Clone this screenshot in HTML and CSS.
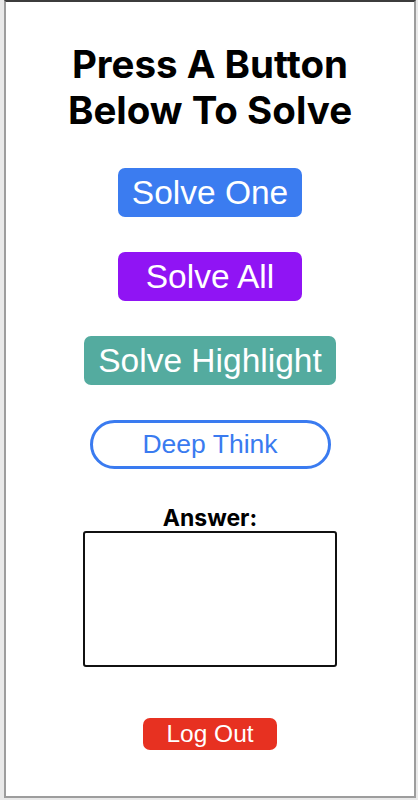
FILE: index.html
```html
<!DOCTYPE html>
<html lang="en">
<head>
  <meta charset="UTF-8">
  <meta name="viewport" content="width=device-width, initial-scale=1.0">
  <title>Solver</title>
  <link rel="stylesheet" href="styles.css">
</head>
<body>
  <div class="popup">
    <h1 class="title">Press A Button<br>Below To Solve</h1>
    <div class="actions">
      <button class="btn btn-one">Solve One</button>
      <button class="btn btn-all">Solve All</button>
      <button class="btn btn-highlight">Solve Highlight</button>
      <button class="btn-think">Deep Think</button>
    </div>
    <div class="answer">
      <label class="answer-label" for="answer">Answer:</label>
      <textarea id="answer" class="answer-box"></textarea>
    </div>
    <button class="btn-logout">Log Out</button>
  </div>
</body>
</html>
```

FILE: styles.css
```css
* {
  margin: 0;
  padding: 0;
  box-sizing: border-box;
}
html, body {
  height: 100%;
}
body {
  background-color: #e9e9e9;
  font-family: "Liberation Sans", Arial, sans-serif;
}
.popup {
  height: 798px;
  margin: 0 2px 0 4px;
  background-color: #fff;
  border: 2px solid #9d9d9d;
  border-top-color: #3c3c3c;
  display: flex;
  flex-direction: column;
  align-items: center;
}
.title {
  margin-top: 39px;
  font-family: Inter, "Liberation Sans", sans-serif;
  font-weight: 700;
  font-size: 38.5px;
  line-height: 46px;
  text-align: center;
  color: #000;
}
.actions {
  margin-top: 35px;
  display: flex;
  flex-direction: column;
  align-items: center;
  gap: 35px;
}
.btn {
  height: 49px;
  min-width: 184px;
  padding: 0 14px;
  border: none;
  border-radius: 7px;
  color: #fff;
  font-family: "Liberation Sans", Arial, sans-serif;
  font-size: 33.5px;
  cursor: pointer;
}
.btn-one {
  background-color: #3b7cf0;
}
.btn-all {
  background-color: #9014f4;
}
.btn-highlight {
  background-color: #54ab9f;
}
.btn-think {
  width: 241px;
  height: 49px;
  border: 3px solid #3a7bf0;
  border-radius: 25px;
  background-color: #fff;
  color: #3a7bf0;
  font-family: "Liberation Sans", Arial, sans-serif;
  font-size: 26.5px;
  cursor: pointer;
}
.answer {
  margin-top: 37px;
  display: flex;
  flex-direction: column;
  align-items: center;
}
.answer-label {
  font-family: Inter, "Liberation Sans", sans-serif;
  font-weight: 700;
  font-size: 23px;
  line-height: 25px;
  color: #000;
}
.answer-box {
  width: 254px;
  height: 136px;
  border: 2px solid #111;
  border-radius: 3px;
  resize: none;
  outline: none;
}
.btn-logout {
  margin-top: 51px;
  width: 134px;
  height: 32px;
  border: none;
  border-radius: 7px;
  background-color: #e73121;
  color: #fff;
  font-family: "Liberation Sans", Arial, sans-serif;
  font-size: 24.5px;
  cursor: pointer;
}
```
